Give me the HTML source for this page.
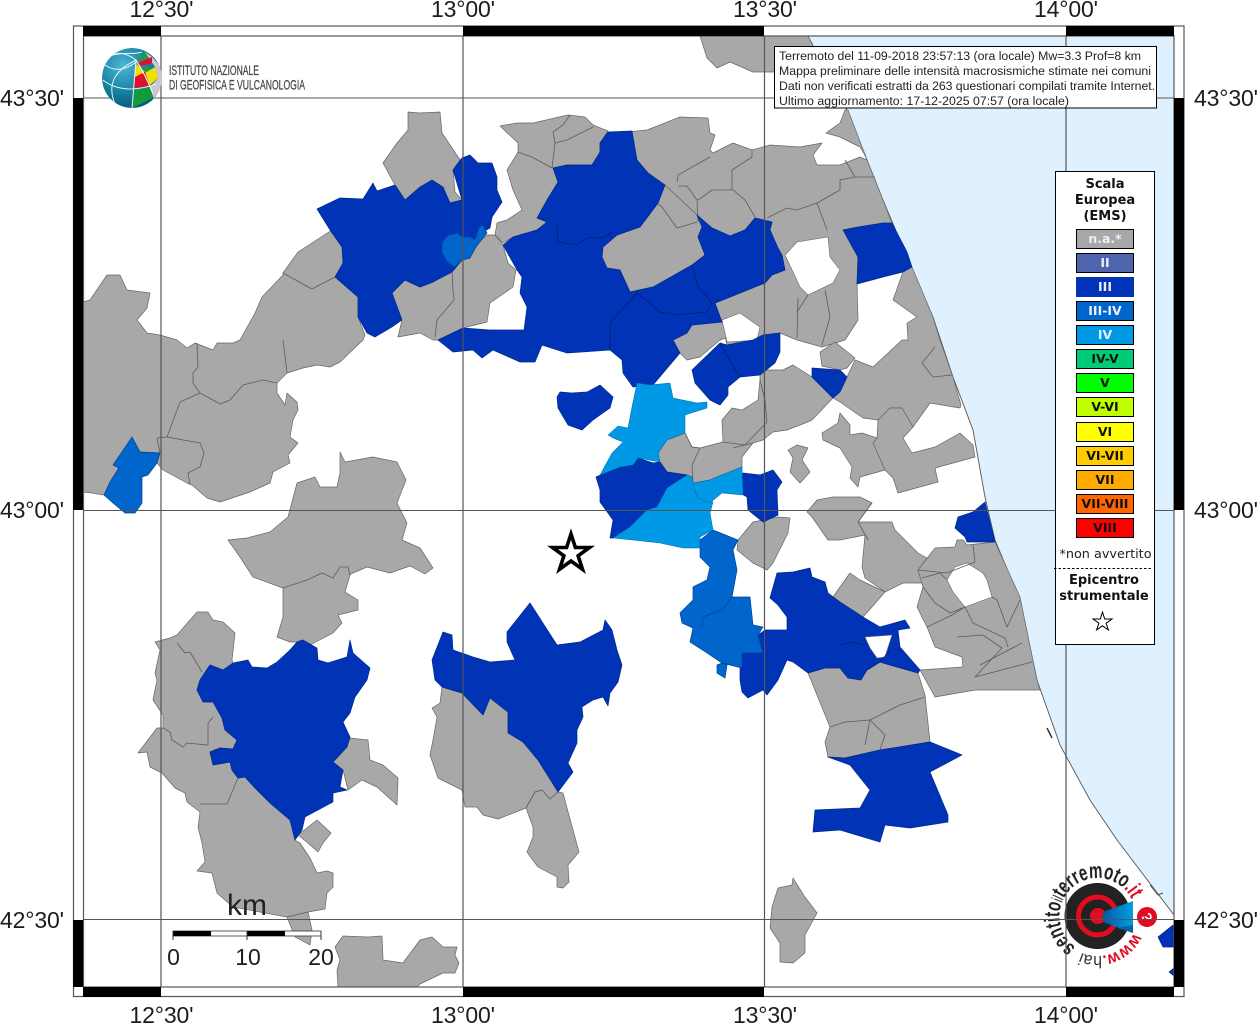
<!DOCTYPE html>
<html><head><meta charset="utf-8"><style>
html,body{margin:0;padding:0;background:#fff;width:1257px;height:1024px;overflow:hidden}
svg{display:block}
.l{font-family:"Liberation Sans",sans-serif;font-size:23px;fill:#1c1c1c}
.g polygon{fill:#a8a8a8;stroke:#666;stroke-width:.7;stroke-linejoin:round}
.b polygon{fill:#0033b5;stroke:#00298f;stroke-width:.7;stroke-linejoin:round}
.c polygon{fill:#0066cc;stroke:#00409a;stroke-width:.7}
.d polygon{fill:#0099e6;stroke:#0066a0;stroke-width:.5}
.w polygon{fill:#fff;stroke:#666;stroke-width:.6}
.li polyline{fill:none;stroke:#5c5c5c;stroke-width:.8}
.lb polyline{fill:none;stroke:#00206f;stroke-width:.8}
.i{font-family:"Liberation Sans",sans-serif;font-size:12.3px;fill:#222}
.t{font-family:"DejaVu Sans",sans-serif;font-weight:bold;font-size:13px;text-anchor:middle;fill:#111}
.s{font-family:"DejaVu Sans",sans-serif;font-weight:bold;font-size:12.5px;text-anchor:middle;fill:#111}
.sw{fill:#eef}
</style></head><body>
<svg width="1257" height="1024" viewBox="0 0 1257 1024" xmlns="http://www.w3.org/2000/svg">
<defs>
<clipPath id="fr"><rect x="83" y="36" width="1091" height="951"/></clipPath>
<clipPath id="ball"><circle cx="132" cy="78" r="30"/></clipPath>
<radialGradient id="bg" cx="35%" cy="30%" r="80%"><stop offset="0" stop-color="#4cb6d4"/><stop offset=".55" stop-color="#14809f"/><stop offset="1" stop-color="#0a4d70"/></radialGradient>
<linearGradient id="cone" x1="0" y1="0" x2="1" y2="0"><stop offset="0" stop-color="#0059a8"/><stop offset="1" stop-color="#00a0e0"/></linearGradient>
<path id="arcA" d="M1075.7 947.1A38 38 0 1 1 1132.5 901.2"/>
<path id="arcB" d="M1133.8 932.9A40 40 0 0 1 1080.6 952.3"/>
</defs>
<rect width="1257" height="1024" fill="#fff"/>
<g clip-path="url(#fr)">
<polygon fill="#dff1ff" stroke="#555" stroke-width=".9" points="808,36 847,110 867,160 883,200 907,257 933,317 953,377 973,430 985,497 995,540 1020,600 1037,680 1060,745 1090,800 1117,840 1174,915 1174,36"/>
<g class="g">
<polygon points="700,36 707,58 717,68 730,62 753,72 773,72 790,72 820,60 808,36"/>
<polygon points="826,133 840,123 845,110 848,110 866,157 860,147 840,137"/>
<polygon points="83,302 90,300 107,275 120,275 127,290 150,293 147,308 137,320 147,333 160,335 177,340 187,348 195,343 213,350 217,343 233,343 240,340 255,313 262,297 283,275 283,273 298,252 332,230 342,247 343,263 335,277 358,297 358,317 365,335 363,340 340,362 330,367 317,365 303,368 287,373 277,383 277,393 285,405 287,393 297,402 298,410 293,420 290,437 298,443 288,455 290,463 273,472 270,483 250,492 220,502 207,498 192,485 187,483 163,470 157,463 160,453 140,452 132,437 119,468 110,482 104,495 92,493 83,492"/>
<polygon points="408,112 420,113 440,112 442,133 460,160 453,170 455,192 462,200 450,203 443,187 432,180 420,187 405,200 395,185 383,163 397,143 408,130"/>
<polygon points="392,293 405,280 420,287 433,282 452,272 462,260 470,258 479,242 487,235 495,235 503,245 508,263 516,270 513,287 490,303 487,322 463,328 440,340 433,340 420,333 398,337 402,320"/>
<polygon points="500,126 517,123 533,123 568,115 585,117 593,125 608,131 600,143 600,152 592,165 567,165 553,168 558,182 547,200 537,218 547,222 537,230 513,237 503,243 495,235 497,223 507,220 522,210 513,190 507,170 518,152 518,143"/>
<polygon points="628,132 647,130 680,117 708,118 710,133 715,135 710,150 713,153 733,143 752,150 770,145 800,147 822,143 813,155 817,165 840,165 860,157 867,160 883,200 892,223 843,230 858,257 857,284 858,320 845,340 822,347 797,340 780,333 763,335 753,340 727,345 722,322 715,303 740,293 765,283 772,275 785,270 782,255 778,248 770,230 772,222 755,218 745,230 730,236 712,228 697,215 665,185 648,173 637,160"/>
<polygon points="665,185 658,203 640,227 617,235 603,247 602,257 607,268 620,270 630,292 653,287 692,265 705,255 698,237 702,227 697,215"/>
<polygon points="673,340 687,333 692,325 722,322 728,337 720,340 700,357 687,360 680,353"/>
<polygon points="820,352 835,342 855,358 847,368 840,370 822,366"/>
<polygon points="847,377 855,360 873,367 902,340 908,340 907,323 917,317 893,300 903,272 912,267 933,317 940,340 953,377 961,405 960,408 930,403 913,427 902,408 890,408 878,420 863,418 840,402 833,398 840,392"/>
<polygon points="878,420 890,408 902,408 913,427 903,438 912,453 935,447 960,433 973,445 975,457 935,468 938,482 898,493 893,478 885,470 873,443 877,438"/>
<polygon points="877,438 862,433 850,435 850,425 840,413 838,423 822,433 823,440 840,448 852,467 850,478 858,487 860,477 885,470 873,443"/>
<polygon points="658,453 667,440 685,433 692,447 700,448 723,442 722,420 732,408 742,410 758,400 760,380 760,370 783,370 793,365 812,377 833,398 812,420 805,423 787,430 773,432 763,440 753,443 742,457 742,467 717,477 710,480 693,483 692,477 687,475 667,472 660,462"/>
<polygon points="788,450 797,445 808,448 802,460 810,472 800,483 790,472 793,458"/>
<polygon points="753,522 738,540 737,550 753,563 767,570 773,563 788,533 790,518 778,517"/>
<polygon points="807,512 817,500 833,497 860,497 872,503 858,522 892,522 895,530 905,540 918,553 927,558 918,570 922,583 903,583 885,592 865,578 862,567 865,535 840,540 828,540 812,517"/>
<polygon points="885,592 872,607 863,617 857,613 840,602 833,597 840,587 850,573 860,580"/>
<polygon points="967,545 995,542 1020,597 1037,680 1040,690 975,690 935,697 920,670 963,667 962,657 935,647 927,627 917,607 923,587 918,570 935,548 955,547 957,540 963,540"/>
<polygon points="808,673 825,668 840,668 848,678 861,680 867,670 880,662 890,665 918,673 925,695 930,742 880,750 845,758 828,757 825,742 830,727"/>
<polygon points="340,452 345,462 373,457 397,462 406,480 397,503 407,523 402,540 420,548 433,568 425,574 410,566 390,573 367,567 353,573 350,575 345,592 358,600 358,610 338,615 342,623 333,633 310,645 303,640 297,642 290,642 277,637 283,617 283,588 253,577 240,557 228,540 247,538 270,532 288,517 297,483 315,477 320,487 337,487 340,473"/>
<polygon points="155,642 170,638 177,635 197,612 208,612 213,620 223,622 235,633 232,660 233,663 223,670 210,665 200,680 197,690 203,702 213,702 222,718 225,730 237,740 233,749 220,748 210,752 213,765 230,762 232,770 238,778 245,777 255,788 270,803 290,820 295,840 300,843 310,858 317,873 327,871 333,873 333,887 327,893 325,909 308,912 312,930 310,945 295,937 287,917 233,907 217,893 212,873 197,871 205,862 202,843 198,827 200,812 187,802 185,793 175,788 162,773 150,767 147,752 138,753 157,728 163,728 163,715 153,700 157,680 155,673 160,650"/>
<polygon points="298,835 317,820 331,833 323,843 318,852 308,843"/>
<polygon points="350,738 368,740 370,760 383,765 398,778 397,805 377,787 362,780 348,790 343,770 333,762 347,747"/>
<polygon points="442,687 462,693 483,715 490,698 508,712 508,733 523,742 538,760 558,792 563,793 567,808 579,852 568,865 569,882 563,888 557,887 557,877 538,867 527,852 533,837 533,827 526,808 498,819 483,815 477,807 465,807 462,790 438,778 430,755 433,740 437,717 432,708 440,703"/>
<polygon points="335,947 343,936 368,937 382,936 383,960 403,963 420,940 432,937 443,947 457,947 455,955 459,963 455,973 443,973 420,984 417,987 338,987 337,970 340,960"/>
<polygon points="772,907 778,888 792,885 793,878 805,897 817,913 805,935 805,953 793,963 780,962 780,943 770,928"/>
</g>
<g class="w">
<polygon points="785,255 797,242 828,237 830,257 840,270 833,283 808,295 800,287"/>
<polygon points="722,320 740,313 760,327 757,340 727,342"/>
<polygon points="947,580 955,567 967,563 983,573 987,580 992,597 965,607 953,592"/>
</g>
<g class="li">
<polyline points="197,343 198,367 193,373 193,383 200,393 220,404 230,400 243,385 263,380 277,383"/>
<polyline points="283,340 287,373"/><polyline points="200,393 180,402 167,437 157,438 160,453"/>
<polyline points="167,437 200,443 204,453 200,467 188,473 190,484"/>
<polyline points="283,273 312,289 335,277"/>
<polyline points="452,272 453,290 454,300 437,320 435,337"/>
<polyline points="518,152 532,157 552,168"/><polyline points="555,143 552,168"/><polyline points="553,132 563,125 570,115"/><polyline points="553,132 555,143 567,140 593,127"/>
<polyline points="658,204 662,207 677,228 697,222"/><polyline points="678,186 687,186 697,200 698,222"/>
<polyline points="677,182 678,175 710,157"/><polyline points="698,200 712,190 733,190 745,200 755,217"/>
<polyline points="732,190 732,170 752,157 752,150"/><polyline points="767,218 787,208 797,210 817,203 827,230"/><polyline points="817,203 840,190 840,180 855,177 875,177"/>
<polyline points="845,160 855,177"/><polyline points="798,298 797,338"/><polyline points="808,295 797,312"/><polyline points="825,290 830,317 822,345"/>
<polyline points="685,433 692,447 700,448"/><polyline points="700,448 692,465 693,483"/><polyline points="733,448 753,443"/>
<polyline points="767,422 765,400 760,380"/><polyline points="723,442 745,445 767,422"/>
<polyline points="922,363 935,347"/><polyline points="922,363 933,377 952,375"/>
<polyline points="872,503 858,522 868,540"/>
<polyline points="918,570 947,573 975,562 973,545"/><polyline points="922,578 940,573 947,580"/>
<polyline points="923,587 935,603 950,613 965,607"/><polyline points="927,627 952,615 965,607 973,623 1005,638 1008,647"/>
<polyline points="992,597 997,600 1007,627 1020,600"/><polyline points="957,637 983,635 1002,648 975,677"/>
<polyline points="1022,643 980,665"/><polyline points="1032,662 975,677"/>
<polyline points="238,778 227,804 200,804"/><polyline points="163,728 170,732 172,740 183,747 187,743 208,745 208,723 213,717"/>
<polyline points="177,643 185,653 190,652 202,672"/><polyline points="283,588 307,580 322,573 333,578 340,567 348,567 350,575"/>
<polyline points="526,808 535,792 542,790 550,799 558,792"/>
<polyline points="287,917 308,912"/>
<polyline points="925,697 900,705 870,720 865,745"/>
<polyline points="830,727 845,722 870,720"/>
<polyline points="880,750 885,735 870,720"/>
</g>
<g class="b">
<polygon points="317,209 340,198 363,199 373,183 377,191 395,185 405,200 420,187 432,180 443,187 450,203 462,200 453,170 462,158 470,155 478,163 492,163 497,177 497,190 502,202 492,217 490,228 483,232 478,233 470,258 462,260 452,272 433,282 420,287 405,280 392,293 402,320 392,327 375,337 367,333 358,317 358,297 335,277 343,263 342,247 330,230"/>
<polygon points="608,132 632,131 637,160 648,173 665,185 658,203 640,227 617,235 603,247 602,257 607,268 620,270 630,292 653,287 692,265 705,255 698,237 702,227 697,215 712,228 730,236 745,230 755,218 772,222 770,230 778,248 782,255 785,270 772,275 765,283 740,293 715,303 722,322 692,325 687,333 673,340 680,353 653,385 633,387 623,373 622,360 610,350 567,353 542,345 535,362 520,362 493,350 482,358 473,350 453,352 438,340 463,328 490,330 524,330 527,307 520,293 522,277 517,270 503,245 513,237 537,230 547,222 537,218 547,200 558,182 553,168 567,165 592,165 600,152 600,143"/>
<polygon points="720,343 692,370 695,383 710,400 720,405 728,395 728,387 740,377 760,375 775,363 780,352 780,333 763,335 753,340 727,345"/>
<polygon points="557,397 558,408 568,425 582,430 593,420 610,408 613,397 600,385 587,392 572,393 560,392"/>
<polygon points="596,477 620,467 633,465 638,458 653,463 660,462 667,472 687,475 667,488 657,507 647,510 630,527 613,538 610,538 613,520 600,502 600,490"/>
<polygon points="740,493 743,473 760,475 773,470 782,482 777,490 778,515 763,522 748,510 747,497"/>
<polygon points="812,368 840,370 847,377 840,392 833,398 812,377"/>
<polygon points="843,230 858,227 883,223 892,223 907,252 912,267 903,272 883,277 857,284 858,257"/>
<polygon points="955,528 958,517 973,512 985,502 995,542 967,542 965,537"/>
<polygon points="770,598 777,573 793,572 810,568 812,577 825,582 828,593 840,602 857,613 863,617 880,627 905,620 910,628 898,630 900,647 920,670 918,673 890,665 880,662 867,670 861,680 848,678 840,668 825,668 808,673 793,662 787,660 778,680 767,695 763,690 748,698 742,692 740,680 740,668 742,653 763,653 758,635 765,630 787,630 787,617 778,605"/>
<polygon points="432,660 443,632 452,635 453,650 473,657 490,662 515,660 507,642 507,632 530,603 557,645 580,642 603,630 605,620 612,630 617,650 622,665 618,682 610,693 608,706 603,697 593,700 582,707 583,717 577,730 577,743 568,763 573,772 558,792 538,760 523,742 508,733 508,712 490,698 483,715 462,693 442,687 435,680"/>
<polygon points="200,680 210,665 223,670 233,663 248,660 252,667 267,668 277,662 290,650 297,642 303,640 317,648 318,660 328,663 347,657 350,640 353,653 370,668 367,680 355,697 350,713 343,722 350,737 347,747 333,762 343,770 340,787 347,790 333,793 333,802 305,817 302,830 295,840 290,820 270,803 255,788 245,777 238,778 232,770 230,762 213,765 210,752 220,748 233,749 237,740 225,730 222,718 213,702 203,702 197,690"/>
<polygon points="828,757 845,758 880,750 930,742 962,755 930,772 948,815 948,822 910,828 885,825 880,842 840,830 813,832 815,810 860,808 870,790 850,765"/>
<polygon points="1158,937 1173,925 1174,947 1163,947"/><polygon points="1169,972 1174,968 1174,976"/>
</g>
<g class="w"><polygon points="865,637 892,635 885,657 877,658 870,648"/></g>
<g class="lb">
<polyline points="557,223 558,242 577,245 587,238 603,238 612,232"/>
<polyline points="637,293 660,312 677,315 707,312 712,303 698,287 692,265"/>
<polyline points="637,293 610,323 610,350"/>
<polyline points="720,343 732,365 740,377"/>
<polyline points="840,645 850,642 865,645"/><polyline points="867,670 880,662 890,650"/>
</g>
<g class="c">
<polygon points="104,495 110,482 119,468 113,465 130,440 132,437 140,452 160,453 157,463 148,475 142,477 142,503 135,513 125,513 113,503"/>
<polygon points="442,242 448,235 458,233 462,237 470,237 475,240 479,227 483,225 487,233 475,248 470,258 462,260 455,267 448,263 442,253"/>
<polygon points="713,530 738,540 733,550 737,570 732,597 750,597 753,625 763,627 758,635 763,653 742,653 742,668 722,663 707,653 690,642 693,628 682,623 680,613 693,600 693,587 707,580 710,567 700,557 700,540"/>
<polygon points="722,663 727,665 725,678 717,673 717,665"/>
</g>
<polyline points="732,597 722,610 703,617 702,628" fill="none" stroke="#00409a" stroke-width=".8"/>
<g class="d">
<polygon points="600,475 612,453 623,442 613,438 608,435 618,426 628,428 632,407 637,383 650,385 670,383 673,398 697,403 707,402 707,408 685,415 685,433 667,440 658,453 660,462 638,458 633,465 620,467"/>
<polygon points="613,538 633,540 660,543 683,548 700,548 700,537 713,530 710,513 713,502 697,497 693,483 692,477 687,475 667,488 657,507 647,510 630,527"/>
<polygon points="693,483 710,480 717,477 742,467 743,495 722,493 710,503 697,497"/>
</g>
</g>
<polyline points="1047,728 1052,738" stroke="#333" stroke-width="1.5" fill="none"/>
<polyline points="1150,885 1158,895 1163,893" stroke="#555" stroke-width="1" fill="none"/>
<!-- HSIT logo -->
<circle cx="1097.5" cy="916" r="33" fill="#222"/>
<circle cx="1097.5" cy="916" r="19" fill="none" stroke="#e30b20" stroke-width="5"/>
<circle cx="1098" cy="916" r="8" fill="#e30b20"/>
<polygon points="1103,912 1133,901 1133,933 1103,922" fill="url(#cone)"/>
<polygon points="1118,928 1133,933 1133,925" fill="#0b5fa5"/>
<circle cx="1147" cy="917" r="10" fill="#e30b20"/>
<text x="1147" y="922" font-family="Liberation Sans,sans-serif" font-weight="bold" font-size="14" fill="#fff" text-anchor="middle" transform="rotate(75 1147 917)">?</text>
<text font-family="Liberation Sans,sans-serif" font-size="22" font-weight="bold" fill="#222"><textPath href="#arcA" textLength="138" lengthAdjust="spacingAndGlyphs">sentito<tspan font-weight="normal" font-size="16">il</tspan>terremoto<tspan fill="#e30b20">.it</tspan></textPath></text>
<text font-family="Liberation Sans,sans-serif" font-size="17" fill="#e30b20" font-weight="bold"><textPath href="#arcB" textLength="62" lengthAdjust="spacingAndGlyphs">www.<tspan fill="#333" font-weight="normal">hai</tspan></textPath></text>
<!-- grid -->
<g stroke="#555" stroke-width="1.2" fill="none">
<path d="M161 36V987M463 36V987M764.5 36V987M1066 36V987"/>
<path d="M83 98H1174M83 510.5H1174M83 919.5H1174" stroke-width="1"/>
</g>
<!-- scale -->
<rect x="173" y="931" width="148" height="5" fill="#fff" stroke="#333" stroke-width=".8"/>
<rect x="173" y="931" width="38" height="5" fill="#000"/><rect x="247" y="931" width="38" height="5" fill="#000"/>
<path d="M173 931V940M247 931V940M321 931V940" stroke="#333" stroke-width="1"/>
<text x="227" y="915" font-family="Liberation Sans,sans-serif" font-size="30" fill="#222">km</text>
<text class="l" x="173.5" y="965" text-anchor="middle">0</text><text class="l" x="248" y="965" text-anchor="middle">10</text><text class="l" x="321" y="965" text-anchor="middle">20</text>
<!-- frame -->
<rect x="73.5" y="26" width="1110.5" height="970.5" fill="none" stroke="#555" stroke-width="1.2"/>
<rect x="83.5" y="36" width="1090.5" height="951" fill="none" stroke="#555" stroke-width="1.2"/>
<g fill="#000">
<rect x="83" y="26" width="78" height="10"/><rect x="463" y="26" width="301" height="10"/><rect x="1066" y="26" width="108" height="10"/>
<rect x="83" y="987" width="78" height="10"/><rect x="463" y="987" width="301" height="10"/><rect x="1066" y="987" width="108" height="10"/>
<rect x="73" y="98" width="10" height="412"/><rect x="73" y="920" width="10" height="67"/>
<rect x="1174" y="98" width="10" height="412"/><rect x="1174" y="920" width="10" height="67"/>
</g>
<!-- labels -->
<g class="l">
<text x="161.5" y="17" text-anchor="middle" textLength="64">12°30'</text><text x="463" y="17" text-anchor="middle" textLength="64">13°00'</text><text x="765" y="17" text-anchor="middle" textLength="64">13°30'</text><text x="1066" y="17" text-anchor="middle" textLength="64">14°00'</text>
<text x="161.5" y="1023" text-anchor="middle" textLength="64">12°30'</text><text x="463" y="1023" text-anchor="middle" textLength="64">13°00'</text><text x="765" y="1023" text-anchor="middle" textLength="64">13°30'</text><text x="1066" y="1023" text-anchor="middle" textLength="64">14°00'</text>
<text x="0" y="106" textLength="64">43°30'</text><text x="0" y="518" textLength="64">43°00'</text><text x="0" y="928" textLength="64">42°30'</text>
<text x="1194" y="106" textLength="64">43°30'</text><text x="1194" y="518" textLength="64">43°00'</text><text x="1194" y="928" textLength="64">42°30'</text>
</g>
<!-- star -->
<polygon points="571,534 575.4,547.5 589.5,547.5 578.1,555.8 582.5,569.3 571,561 559.5,569.3 563.9,555.8 552.5,547.5 566.6,547.5" fill="#fff" stroke="#000" stroke-width="3.6" stroke-miterlimit="10"/>
<!-- info box -->
<rect x="774.5" y="46.5" width="382" height="61.5" fill="#fff" stroke="#000" stroke-width="1"/>
<g class="i">
<text x="779" y="60" textLength="362">Terremoto del 11-09-2018 23:57:13 (ora locale) Mw=3.3 Prof=8 km</text>
<text x="779" y="75" textLength="372">Mappa preliminare delle intensità macrosismiche stimate nei comuni</text>
<text x="779" y="90" textLength="376">Dati non verificati estratti da 263 questionari compilati tramite Internet.</text>
<text x="779" y="105" textLength="290">Ultimo aggiornamento: 17-12-2025 07:57 (ora locale)</text>
</g>
<!-- legend -->
<rect x="1055.5" y="171.5" width="99" height="473" fill="#fff" stroke="#000" stroke-width="1"/>
<text class="t" x="1105" y="188">Scala</text><text class="t" x="1105" y="204">Europea</text><text class="t" x="1105" y="220">(EMS)</text>
<g stroke="#000" stroke-width="1">
<rect x="1076.5" y="229.5" width="57" height="19" fill="#a8a8a8"/>
<rect x="1076.5" y="253.5" width="57" height="19" fill="#4f64ac"/>
<rect x="1076.5" y="277.5" width="57" height="19" fill="#0033b5" stroke="#0033b5"/>
<rect x="1076.5" y="301.5" width="57" height="19" fill="#0066cc"/>
<rect x="1076.5" y="325.5" width="57" height="19" fill="#0099e6"/>
<rect x="1076.5" y="349.5" width="57" height="19" fill="#00cc77"/>
<rect x="1076.5" y="373.5" width="57" height="19" fill="#00ff00"/>
<rect x="1076.5" y="397.5" width="57" height="19" fill="#bfff00"/>
<rect x="1076.5" y="422.5" width="57" height="19" fill="#ffff00"/>
<rect x="1076.5" y="446.5" width="57" height="19" fill="#ffcc00"/>
<rect x="1076.5" y="470.5" width="57" height="19" fill="#ffaa00"/>
<rect x="1076.5" y="494.5" width="57" height="19" fill="#ff6600"/>
<rect x="1076.5" y="518.5" width="57" height="19" fill="#ff0000"/>
</g>
<g class="s">
<text x="1105" y="243" class="sw">n.a.*</text><text x="1105" y="267" class="sw">II</text><text x="1105" y="291" class="sw">III</text><text x="1105" y="315" class="sw">III-IV</text><text x="1105" y="339" class="sw">IV</text>
<text x="1105" y="363">IV-V</text><text x="1105" y="387">V</text><text x="1105" y="411">V-VI</text><text x="1105" y="436">VI</text><text x="1105" y="460">VI-VII</text><text x="1105" y="484">VII</text><text x="1105" y="508">VII-VIII</text><text x="1105" y="532">VIII</text>
</g>
<text x="1105.5" y="558" font-family="DejaVu Sans,sans-serif" font-size="12.8" fill="#222" text-anchor="middle">*non avvertito</text>
<path d="M1054 568.5H1153" stroke="#000" stroke-width="1" stroke-dasharray="2.5 2" fill="none"/>
<text class="t" x="1104" y="584">Epicentro</text><text class="t" x="1104" y="600">strumentale</text>
<polygon points="1102.5,612 1104.7,619 1112,619 1106.1,623.2 1108.4,630 1102.5,625.8 1096.6,630 1098.9,623.2 1093,619 1100.3,619" fill="#fff" stroke="#000" stroke-width="1"/>
<!-- INGV -->
<g clip-path="url(#ball)">
<circle cx="132" cy="78" r="30" fill="url(#bg)"/>
<polygon points="135,62 145,52 152,57" fill="#2a9a3c"/>
<polygon points="145,52 152,57 162,68 162,88 155,97 150,87 158,78 155,67" fill="#cfc6d2"/>
<polygon points="137,63 152,57 152,63 142,66" fill="#e3102b"/>
<polygon points="135,63 145,72 135,77" fill="#f4e000"/>
<polygon points="142,66 153,69 146,72" fill="#2a9a3c"/>
<polygon points="145,73 155,67 158,78 150,85" fill="#f0e200"/>
<polygon points="135,77 145,72 149,86 134,88" fill="#e3102b"/>
<polygon points="134,90 150,87 153,98 132,108 131,108" fill="#139a3f"/>
<g fill="none" stroke="#e8f4f8" stroke-width="1">
<path d="M136 60L132 108"/><path d="M136 60C120 68 105 80 115 104"/><path d="M136 60C122 50 112 52 105 62"/>
<path d="M103 80C115 90 135 92 156 84"/><path d="M105 65C115 72 126 70 136 62"/><path d="M113 55C125 52 135 55 142 52"/>
<path d="M136 60C145 75 150 85 155 100" stroke="#fff"/>
</g>
</g>
<text x="169" y="75" font-family="Liberation Sans,sans-serif" font-size="14" fill="#444" stroke="#444" stroke-width=".25" textLength="90" lengthAdjust="spacingAndGlyphs">ISTITUTO NAZIONALE</text>
<text x="169" y="89.5" font-family="Liberation Sans,sans-serif" font-size="14" fill="#444" stroke="#444" stroke-width=".25" textLength="136" lengthAdjust="spacingAndGlyphs">DI GEOFISICA E VULCANOLOGIA</text>
</svg>
</body></html>
